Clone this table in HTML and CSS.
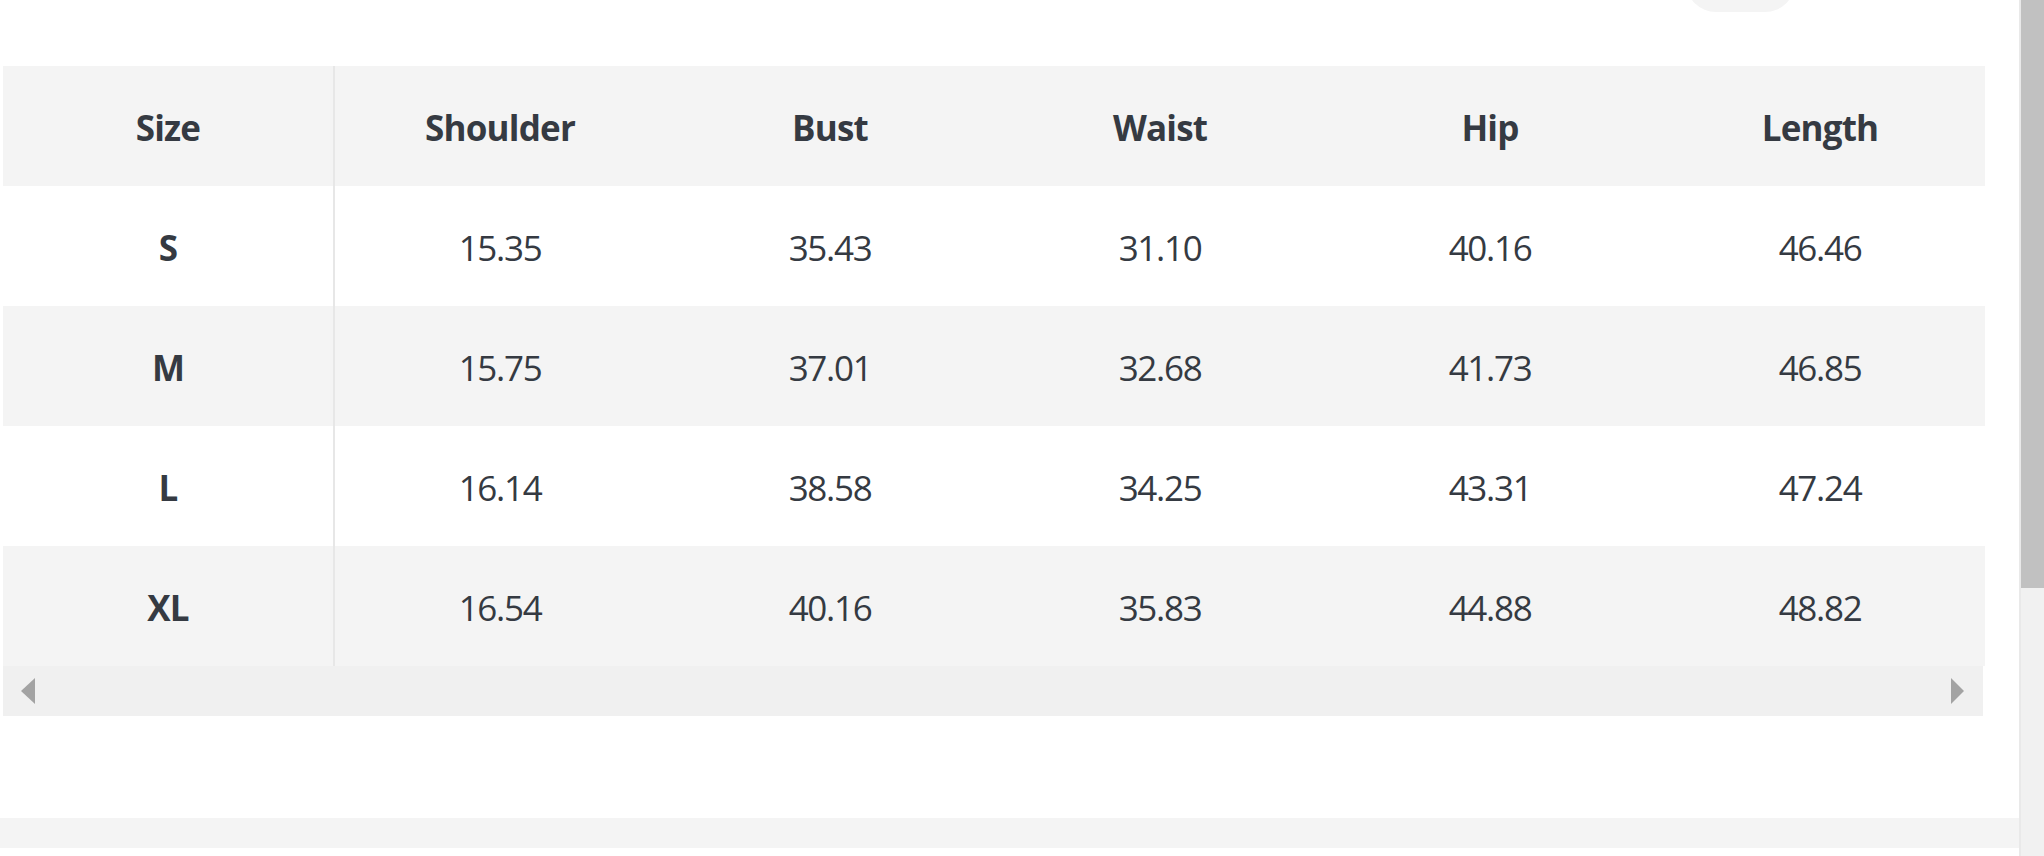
FILE: index.html
```html
<!DOCTYPE html>
<html lang="en">
<head>
<meta charset="utf-8">
<title>Size chart</title>
<link rel="stylesheet" href="styles.css">
</head>
<body>
<div class="page">
  <main class="main">
    <div class="topbar"><div class="pill"></div></div>
    <div class="table-wrap">
      <table class="size-table">
        <thead>
          <tr><th class="first">Size</th><th>Shoulder</th><th>Bust</th><th>Waist</th><th>Hip</th><th>Length</th></tr>
        </thead>
        <tbody>
          <tr><td class="first">S</td><td>15.35</td><td>35.43</td><td>31.10</td><td>40.16</td><td>46.46</td></tr>
          <tr><td class="first">M</td><td>15.75</td><td>37.01</td><td>32.68</td><td>41.73</td><td>46.85</td></tr>
          <tr><td class="first">L</td><td>16.14</td><td>38.58</td><td>34.25</td><td>43.31</td><td>47.24</td></tr>
          <tr><td class="first">XL</td><td>16.54</td><td>40.16</td><td>35.83</td><td>44.88</td><td>48.82</td></tr>
        </tbody>
      </table>
      <div class="hscroll"><span class="arrow arrow-left"></span><span class="arrow arrow-right"></span></div>
    </div>
    <div class="footer-band"></div>
  </main>
  <div class="vscroll"><div class="thumb"></div></div>
</div>
</body>
</html>
```

FILE: styles.css
```css
html, body {
  margin: 0;
  padding: 0;
  background: #ffffff;
}

body {
  font-family: "Open Sans", "Noto Sans", sans-serif;
  color: #353a42;
}

.page {
  display: flex;
  height: 856px;
  overflow: hidden;
}

.main {
  flex: none;
  width: 2019px;
}

.topbar {
  height: 66px;
  display: flex;
  justify-content: flex-end;
  padding-right: 224px;
  overflow: hidden;
}

.pill {
  width: 109px;
  height: 60px;
  margin-top: -48px;
  border-radius: 30px;
  background: #f4f4f4;
}

.table-wrap {
  width: 1980px;
  margin-left: 3px;
}

.size-table {
  width: 1980px;
  table-layout: fixed;
  border-collapse: collapse;
  border-spacing: 0;
}

.size-table th,
.size-table td {
  width: 330px;
  padding: 0;
  text-align: center;
  vertical-align: middle;
  color: #353a42;
  line-height: 1.2;
}

.size-table th {
  height: 116px;
  padding-top: 4px;
  font-size: 35px;
  font-weight: 700;
  letter-spacing: -0.8px;
}

.size-table td {
  height: 117px;
  padding-top: 3px;
  font-size: 35px;
  font-weight: 400;
  letter-spacing: -1.3px;
}

.size-table td.first {
  font-size: 35px;
  font-weight: 700;
  letter-spacing: -0.8px;
}

.size-table .first {
  border-right: 2px solid #e7e7e7;
}

.size-table thead tr {
  background: #f4f4f4;
}

.size-table tbody tr {
  background: #ffffff;
}

.size-table tbody tr:nth-child(even) {
  background: #f4f4f4;
}

.hscroll {
  height: 50px;
  background: #f0f0f0;
  display: flex;
  align-items: center;
  justify-content: space-between;
  padding: 0 19px 0 18px;
}

.arrow {
  width: 0;
  height: 0;
  border-top: 13px solid transparent;
  border-bottom: 13px solid transparent;
}

.arrow-left {
  border-right: 14px solid #a3a3a3;
}

.arrow-right {
  border-left: 13px solid #a3a3a3;
}

.footer-band {
  margin-top: 102px;
  height: 30px;
  background: #f4f4f4;
}

.vscroll {
  flex: none;
  width: 25px;
  background: #f1f1f1;
  box-sizing: border-box;
  border-left: 2px solid #e9e9e9;
}

.thumb {
  height: 588px;
  background: #c1c1c1;
}
```
